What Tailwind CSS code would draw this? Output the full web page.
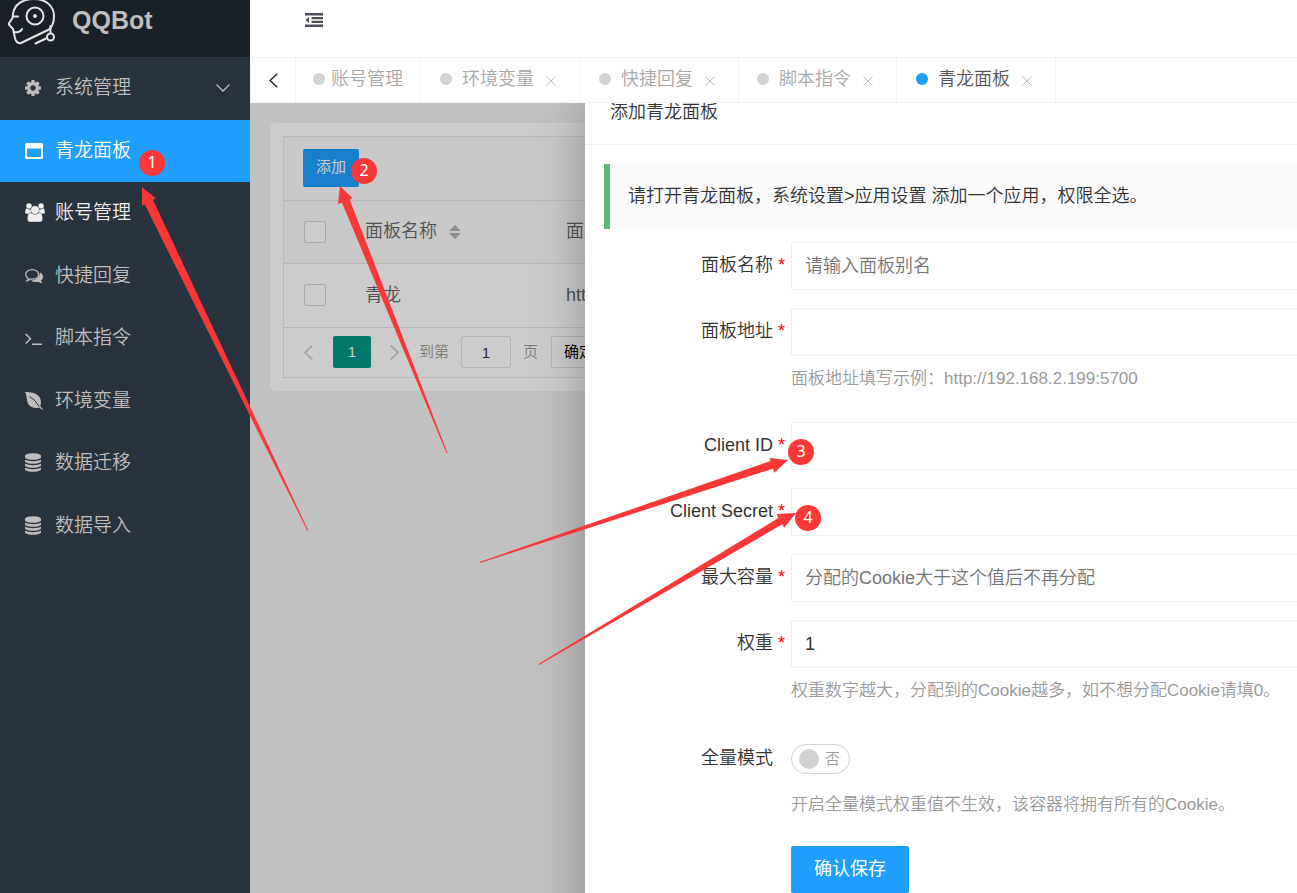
<!DOCTYPE html>
<html lang="zh-CN">
<head>
<meta charset="utf-8">
<meta name="viewport" content="width=device-width, initial-scale=1">
<title>QQBot</title>
<script src="https://cdn.jsdelivr.net/npm/@tailwindcss/browser@4"></script>
</head>
<body class="relative flex h-screen overflow-hidden bg-white font-['Liberation_Sans','Noto_Sans_CJK_SC',sans-serif] text-[18px] font-[350] text-[#333]">

<svg class="hidden" aria-hidden="true">
  <symbol id="database" viewBox="0 0 1536 1792"><path d="M768 768q237 0 443-43t325-127v170q0 69-103 128t-280 93.5-385 34.5-385-34.5-280-93.5-103-128v-170q119 84 325 127t443 43zm0 768q237 0 443-43t325-127v170q0 69-103 128t-280 93.5-385 34.5-385-34.5-280-93.5-103-128v-170q119 84 325 127t443 43zm0-384q237 0 443-43t325-127v170q0 69-103 128t-280 93.5-385 34.5-385-34.5-280-93.5-103-128v-170q119 84 325 127t443 43zm0-1152q208 0 385 34.5t280 93.5 103 128v128q0 69-103 128t-280 93.5-385 34.5-385-34.5-280-93.5-103-128v-128q0-69 103-128t280-93.5 385-34.5z"/></symbol>
  <symbol id="close" viewBox="0 0 10 10"><path d="M.5.5l9 9M9.500.5l-9 9" fill="none" stroke="currentColor"/></symbol>
</svg>

<aside class="flex w-[250px] shrink-0 flex-col bg-[#28333e] text-[19px] text-[#bfbdbd]">
  <a href="#" class="flex h-[57px] items-start bg-[#192027] pl-2">
    <svg class="h-[46px] w-[48px]" viewBox="8 0 48 46" fill="none" stroke="#e4e4e4" stroke-width="2" stroke-linecap="round" stroke-linejoin="round">
      <path d="M21 43 49 29.500C52 27 54 22 54 16 54 7 47-1 34-1 22-1 14 5 13 14L12.500 18 8.500 24 13 29 15 38Q16.500 44 21 43"/>
      <path d="M13 16.500h5M14 32q6 1 8-3M50.500 26v7M46 38.500 35.500 43.500"/>
      <circle cx="35" cy="16" r="8.500"/><circle cx="35" cy="16" r="1.500" fill="#e4e4e4" stroke-width="1"/><circle cx="50.500" cy="37" r="3.500"/>
    </svg>
    <span class="ml-4 text-[25px] leading-10 font-bold">QQBot</span>
  </a>
  <nav class="flex flex-col">
    <a href="#" class="flex items-center pl-[25px] odd:h-[63px] even:h-[62px]">
      <svg class="mr-[14px] mb-0.5 size-4" viewBox="0 128 1536 1536" fill="currentColor"><path d="M1024 896q0-106-75-181t-181-75-181 75-75 181 75 181 181 75 181-75 75-181zm512-109v222q0 12-8 23t-20 13l-185 28q-19 54-39 91 35 50 107 138 10 12 10 25t-9 23q-27 37-99 108t-94 71q-12 0-26-9l-138-108q-44 23-91 38-16 136-29 186-7 28-36 28h-222q-14 0-24.500-8.500t-11.500-21.500l-28-184q-49-16-90-37l-141 107q-10 9-25 9-14 0-25-11-126-114-165-168-7-10-7-23 0-12 8-23 15-21 51-66.500t54-70.500q-27-50-41-99l-183-27q-13-2-21-12.500t-8-23.500v-222q0-12 8-23t19-13l186-28q14-46 39-92-40-57-107-138-10-12-10-24 0-10 9-23 26-36 98.500-107.500t94.500-71.500q13 0 26 10l138 107q44-23 91-38 16-136 29-186 7-28 36-28h222q14 0 24.500 8.500t11.500 21.500l28 184q49 16 90 37l142-107q9-9 24-9 13 0 25 10 129 119 165 170 7 8 7 22 0 12-8 23-15 21-51 66.500t-54 70.500q26 50 41 98l183 28q13 2 21 12.500t8 23.500z"/></svg>
      系统管理
      <svg class="mr-5 mb-0.5 ml-auto h-2 w-[14px]" viewBox="0 0 14 8" fill="none" stroke="currentColor" stroke-width="1.300"><path d="M.5.500 7 7 13.500.500"/></svg>
    </a>
    <a href="#" class="flex items-center bg-[#1e9fff] pl-[25px] text-white odd:h-[63px] even:h-[62px]">
      <svg class="mr-3 h-4 w-[18px]" viewBox="0 0 18 16" fill="currentColor"><path fill-rule="evenodd" d="M1.500 0h15Q18 0 18 1.500v13q0 1.500-1.500 1.500h-15Q0 16 0 14.500v-13Q0 0 1.500 0zM2 5.500V14h14V5.500z"/></svg>
      青龙面板
    </a>
    <a href="#" class="flex items-center pl-[25px] text-[#f0efef] odd:h-[63px] even:h-[62px]">
      <svg class="mr-[10px] mb-0.5 h-[19px] w-5" viewBox="0 0 20 19" fill="currentColor" stroke="#28333e" stroke-width=".4"><circle cx="4" cy="3" r="3"/><circle cx="16" cy="3" r="3"/><path d="M0 9.500Q0 5 1.800 5.200 4 7 6.500 6V11H2Q0 11 0 9.500zM20 9.500Q20 5 18.200 5.200 16 7 13.500 6V11H18Q20 11 20 9.500z"/><path d="M2.300 16Q2.300 10 5.500 9.800 10 12.500 14.500 9.800 17.700 10 17.700 16 17.700 19 15 19H5Q2.300 19 2.300 16z"/><circle cx="10" cy="7" r="4.300"/></svg>
      账号管理
    </a>
    <a href="#" class="flex items-center pl-[25px] odd:h-[63px] even:h-[62px]">
      <svg class="mr-3 h-[15px] w-[18px]" viewBox="0 0 18 15"><path d="M15 3.500Q18 5 18 8 18 10 16 11.500 16.300 13 17.600 14 15.500 14.300 13.500 12.800 8.500 13.600 6 11.500 14.500 11.200 15 3.500z" fill="currentColor"/><path d="M7.200.7C10.800.7 13.600 2.800 13.600 5.500S10.800 10.200 7.200 10.200Q6.200 10.200 5.400 10 3.800 11.300 2 11.600 3.100 10.500 3.200 9.200.7 7.800.7 5.500C.7 2.800 3.600.7 7.200.7z" fill="none" stroke="currentColor" stroke-width="1.300"/></svg>
      快捷回复
    </a>
    <a href="#" class="flex items-center pl-[25px] odd:h-[63px] even:h-[62px]">
      <svg class="mr-3 h-3 w-[18px]" viewBox="0 0 18 12" fill="none" stroke="currentColor" stroke-width="1.500"><path d="M.7 1 5.500 5.700.7 10.500M7 11.200h10"/></svg>
      脚本指令
    </a>
    <a href="#" class="flex items-center pl-[25px] odd:h-[63px] even:h-[62px]">
      <svg class="mr-3 size-[18px]" viewBox="0 0 18 18"><path d="M0 0C8 0 13 2 15 6 16.500 9 16 12.500 15.300 14.300L18 17.500 17.300 18 14.300 15.500C11 16.700 6.500 16 4 13 1.300 10 2.500 5 0 0z" fill="currentColor"/><path d="M4.500 4.500Q10 7.500 14.200 14.500" fill="none" stroke="#28333e"/></svg>
      环境变量
    </a>
    <a href="#" class="flex items-center pl-[25px] odd:h-[63px] even:h-[62px]">
      <svg class="mr-[14px] mb-0.5 h-[19px] w-4" fill="currentColor"><use href="#database"/></svg>
      数据迁移
    </a>
    <a href="#" class="flex items-center pl-[25px] odd:h-[63px] even:h-[62px]">
      <svg class="mr-[14px] mb-0.5 h-[19px] w-4" fill="currentColor"><use href="#database"/></svg>
      数据导入
    </a>
  </nav>
</aside>

<div class="flex min-w-0 flex-1 flex-col">
  <header class="flex h-[57px] shrink-0 items-start pt-[13px] pl-[55px]">
    <button type="button" aria-label="收起菜单"><svg class="h-[14px] w-[18px]" viewBox="0 0 18 14" fill="#4b4b55"><path d="M0 0h18v2.400H0zM6.500 3.900h11.500v2.300H6.500zM6.500 7.800h11.500v2.300H6.500zM0 11.600h18V14H0zM4 4v6L.5 7z"/></svg></button>
  </header>

  <nav class="flex h-[46px] shrink-0 border-y border-l border-[#f4f4f4] text-[#a6a6a6]">
    <button type="button" aria-label="向左" class="flex w-[45px] items-center justify-center border-r border-[#f4f4f4] text-[#222]"><svg class="h-[15px] w-[9px]" viewBox="0 0 9 15" fill="none" stroke="currentColor" stroke-width="1.500"><path d="M8.300.7 1 7.500l7.300 6.800"/></svg></button>
    <a href="#" class="flex items-center gap-1.5 border-r border-[#f4f4f4] px-[17px] pb-0.5"><span class="size-3 rounded-full bg-[#d2d2d2]"></span>账号管理</a>
    <a href="#" class="flex items-center gap-[10px] border-r border-[#f4f4f4] pr-[23px] pb-0.5 pl-[19px]"><span class="size-3 rounded-full bg-[#d2d2d2]"></span>环境变量<svg class="mt-1 ml-0.5 size-[10px] text-[#bbb]"><use href="#close"/></svg></a>
    <a href="#" class="flex items-center gap-[10px] border-r border-[#f4f4f4] pr-[23px] pb-0.5 pl-[19px]"><span class="size-3 rounded-full bg-[#d2d2d2]"></span>快捷回复<svg class="mt-1 ml-0.5 size-[10px] text-[#bbb]"><use href="#close"/></svg></a>
    <a href="#" class="flex items-center gap-[10px] border-r border-[#f4f4f4] pr-[23px] pb-0.5 pl-[18px]"><span class="size-3 rounded-full bg-[#d2d2d2]"></span>脚本指令<svg class="mt-1 ml-0.5 size-[10px] text-[#bbb]"><use href="#close"/></svg></a>
    <a href="#" class="flex items-center gap-[10px] border-r border-[#f4f4f4] pr-[23px] pb-0.5 pl-[19px] text-[#555]"><span class="size-3 rounded-full bg-[#1e9fff]"></span>青龙面板<svg class="mt-1 ml-0.5 size-[10px] text-[#bbb]"><use href="#close"/></svg></a>
  </nav>

  <main class="relative flex-1 overflow-hidden bg-[#f2f2f2] p-5">
    <section class="rounded-md bg-white p-[13px] text-[#666]">
      <div class="border border-[#e6e6e6]">
        <div class="flex h-16 items-center border-b border-[#e6e6e6] bg-[#fafafa] pb-0.5 pl-[19px]">
          <button type="button" class="h-[38px] rounded-xs bg-[#1e9fff] px-[13px] text-[15px] font-normal text-white">添加</button>
        </div>
        <table class="w-full table-fixed text-left">
          <thead>
            <tr class="h-[62px] border-b border-[#e6e6e6] bg-[#fafafa]">
              <th class="w-[81px] pl-5"><input type="checkbox" aria-label="全选" class="block size-[22px] appearance-none rounded-xs border border-[#d2d2d2] bg-white"></th>
              <th class="w-[201px] font-[350]"><span class="flex items-center gap-3">面板名称<svg class="h-[14px] w-3" viewBox="0 0 12 14" fill="#b2b2b2"><path d="M6 0l6 6H0zM0 8h12l-6 6z"/></svg></span></th>
              <th class="font-[350]">面板地址</th>
            </tr>
          </thead>
          <tbody>
            <tr class="h-16 border-b border-[#e6e6e6]">
              <td class="pl-5"><input type="checkbox" aria-label="选择青龙" class="block size-[22px] appearance-none rounded-xs border border-[#d2d2d2] bg-white"></td>
              <td>青龙</td>
              <td>http://192.168.2.199:5700</td>
            </tr>
          </tbody>
        </table>
        <div class="flex h-[49px] items-center pl-5 text-[15px] text-[#999]">
          <button type="button" aria-label="上一页"><svg class="h-[15px] w-[9px]" viewBox="0 0 9 15" fill="none" stroke="#c8c8c8" stroke-width="1.700"><path d="M8.300.7 1 7.500l7.300 6.800"/></svg></button>
          <button type="button" class="ml-5 h-8 w-[38px] rounded-xs bg-[#009688] font-normal text-white">1</button>
          <button type="button" aria-label="下一页" class="ml-[19px]"><svg class="h-[15px] w-[9px]" viewBox="0 0 9 15" fill="none" stroke="#c8c8c8" stroke-width="1.700"><path d="M.7.700 8 7.500.7 14.300"/></svg></button>
          <label for="page" class="ml-5">到第</label>
          <input id="page" value="1" class="mx-3 h-8 w-[50px] rounded-xs border border-[#e2e2e2] bg-white text-center text-[#333]">
          <span>页</span>
          <button type="button" class="ml-[13px] h-8 rounded-xs border border-[#e2e2e2] bg-white px-3 font-normal text-black">确定</button>
        </div>
      </div>
    </section>

    <div class="absolute inset-0 bg-black/20"></div>

    <section class="absolute top-0 right-0 -bottom-20 left-[335px] overflow-hidden bg-white shadow-[1px_1px_50px_rgba(0,0,0,0.3)]">
      <h2 class="h-[42px] border-b border-[#eee] pl-[25px] leading-[18px]">添加青龙面板</h2>
      <form class="pt-[19px]">
        <p class="ml-[19px] flex h-[65px] items-center border-l-[6px] border-[#5fb878] bg-[#fafafa] pl-[18px] whitespace-nowrap">请打开青龙面板，系统设置&gt;应用设置 添加一个应用，权限全选。</p>
        <div class="mt-[13px] mb-[18px] grid grid-cols-[206px_1fr]">
          <label for="name" class="flex h-12 items-center justify-end gap-[5px] pr-[5px] pb-0.5">面板名称<span class="w-2 text-[#f00]">*</span></label>
          <input id="name" placeholder="请输入面板别名" class="h-12 min-w-0 rounded-l-xs border border-r-0 border-[#eee] px-[13px] placeholder:text-[#757575]">
        </div>
        <div class="mb-5 grid grid-cols-[206px_1fr]">
          <label for="address" class="flex h-12 items-center justify-end gap-[5px] pr-[5px] pb-0.5">面板地址<span class="w-2 text-[#f00]">*</span></label>
          <input id="address" class="h-12 min-w-0 rounded-l-xs border border-r-0 border-[#eee] px-[13px]">
          <p class="col-start-2 text-[17px] leading-[46px] whitespace-nowrap text-[#999]">面板地址填写示例：http://192.168.2.199:5700</p>
        </div>
        <div class="mb-[18px] grid grid-cols-[206px_1fr]">
          <label for="client-id" class="flex h-12 items-center justify-end gap-[5px] pr-[5px] pb-0.5">Client ID<span class="w-2 text-[#f00]">*</span></label>
          <input id="client-id" class="h-12 min-w-0 rounded-l-xs border border-r-0 border-[#eee] px-[13px]">
        </div>
        <div class="mb-[18px] grid grid-cols-[206px_1fr]">
          <label for="client-secret" class="flex h-12 items-center justify-end gap-[5px] pr-[5px] pb-0.5">Client Secret<span class="w-2 text-[#f00]">*</span></label>
          <input id="client-secret" class="h-12 min-w-0 rounded-l-xs border border-r-0 border-[#eee] px-[13px]">
        </div>
        <div class="mb-[18px] grid grid-cols-[206px_1fr]">
          <label for="capacity" class="flex h-12 items-center justify-end gap-[5px] pr-[5px] pb-0.5">最大容量<span class="w-2 text-[#f00]">*</span></label>
          <input id="capacity" placeholder="分配的Cookie大于这个值后不再分配" class="h-12 min-w-0 rounded-l-xs border border-r-0 border-[#eee] px-[13px] placeholder:text-[#757575]">
        </div>
        <div class="mb-5 grid grid-cols-[206px_1fr]">
          <label for="weight" class="flex h-12 items-center justify-end gap-[5px] pr-[5px] pb-0.5">权重<span class="w-2 text-[#f00]">*</span></label>
          <input id="weight" value="1" class="h-12 min-w-0 rounded-l-xs border border-r-0 border-[#eee] px-[13px]">
          <p class="col-start-2 text-[17px] leading-[46px] whitespace-nowrap text-[#999]">权重数字越大，分配到的Cookie越多，如不想分配Cookie请填0。</p>
        </div>
        <div class="mb-[18px] grid grid-cols-[206px_1fr]">
          <label for="full-mode" class="flex h-12 items-center justify-end pr-[18px]">全量模式</label>
          <label class="mt-[10px] flex h-[30px] w-[59px] items-center gap-[6px] rounded-full border border-[#d2d2d2] pl-[7px] text-[15px] text-[#999]">
            <input id="full-mode" type="checkbox" role="switch" class="size-5 appearance-none rounded-full bg-[#d2d2d2]">否
          </label>
          <p class="col-start-2 text-[17px] leading-[46px] whitespace-nowrap text-[#999]">开启全量模式权重值不生效，该容器将拥有所有的Cookie。</p>
        </div>
        <button type="submit" class="ml-[206px] h-[47px] rounded-xs bg-[#1e9fff] px-[23px] font-normal text-white">确认保存</button>
      </form>
    </section>
  </main>
</div>

<!-- Numbered guide markers over the page -->
<svg class="pointer-events-none absolute top-0 left-0 h-[893px] w-[1297px]" viewBox="0 0 1297 893" fill="#fb3838" aria-hidden="true">
  <path d="M142 187 155.700 198.300 153 200 308.500 531 307.500 531 144.700 204.300 142 206z"/>
  <path d="M340 186 352.300 198 349.700 199.700 447.500 453 446.500 453 342 202.700 338 204z"/>
  <path d="M788 460 774.300 472.700 773 468.700 480 563 479.500 562 770.700 461 769.300 458z"/>
  <path d="M796 513 784.300 527.700 782.300 524.300 539 665 538.500 664 778.300 518 776.700 514z"/>
</svg>
<span class="absolute top-[150px] left-[139px] size-[26px] rounded-full bg-[#fb3838] text-center font-['Noto_Sans'] text-[16px] leading-6 font-normal text-white">1</span>
<span class="absolute top-[158px] left-[351px] size-[26px] rounded-full bg-[#fb3838] text-center font-['Noto_Sans'] text-[16px] leading-6 font-normal text-white">2</span>
<span class="absolute top-[439px] left-[788px] size-[26px] rounded-full bg-[#fb3838] text-center font-['Noto_Sans'] text-[16px] leading-6 font-normal text-white">3</span>
<span class="absolute top-[505px] left-[795px] size-[26px] rounded-full bg-[#fb3838] text-center font-['Noto_Sans'] text-[16px] leading-6 font-normal text-white">4</span>
</body>
</html>
